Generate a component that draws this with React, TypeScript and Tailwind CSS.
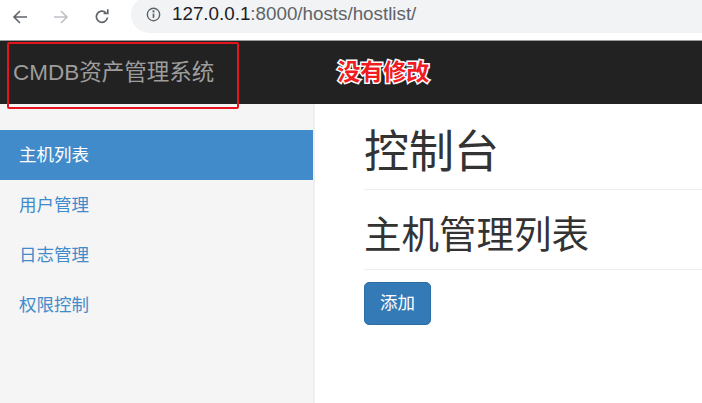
import React from "react";

const font = "font-['Liberation_Sans','Noto_Sans_CJK_SC',sans-serif]";

const menu = ["主机列表", "用户管理", "日志管理", "权限控制"];

// browser toolbar at the top of the screenshot
const Toolbar = () => {
  return (
    <div className="flex h-[40px] items-start bg-white">
      <div className="flex h-[33px] items-center pl-[12px] gap-[25px]">
        <svg width="16" height="16" viewBox="0 0 16 16" fill="none" stroke="#5f6368" strokeWidth="1.6">
          <path d="M15 8H2M8 2L2 8l6 6" />
        </svg>
        <svg width="16" height="16" viewBox="0 0 16 16" fill="none" stroke="#bdc1c6" strokeWidth="1.6">
          <path d="M1 8h13M8 2l6 6-6 6" />
        </svg>
        <svg width="16" height="16" viewBox="0 0 16 16" fill="none" stroke="#5f6368" strokeWidth="1.7">
          <path d="M13.5 8.5A5.6 5.6 0 1 1 11.8 3.6" />
          <path d="M9.6 4.4h4.2V0.3" fill="none" />
        </svg>
      </div>
      <div className="ml-[21px] mt-[-4px] flex h-[37px] flex-1 items-center rounded-l-full bg-[#f1f3f4] pl-[15px]">
        <svg width="15" height="15" viewBox="0 0 16 16" fill="none" stroke="#5f6368" strokeWidth="1.5">
          <circle cx="8" cy="8" r="6.6" />
          <path d="M8 7v4.6" strokeWidth="1.8" />
          <circle cx="8" cy="4.6" r="0.5" fill="#5f6368" />
        </svg>
        <div className={`ml-[11px] text-[18.8px] ${font}`}>
          <span className="text-[#202124]">127.0.0.1</span>
          <span className="text-[#5f6368]">:8000/hosts/hostlist/</span>
        </div>
      </div>
    </div>
  );
};

const App = () => {
  return (
    <div className={`flex h-[403px] w-[702px] flex-col overflow-hidden bg-white ${font}`}>
      <Toolbar />

      <div className="relative flex h-[64px] items-center border-t border-[#9a9a9a] bg-[#222222]">
        <div className="pl-[13px] text-[22.5px] text-[#9d9d9d]">CMDB资产管理系统</div>
        <div className="ml-[123px] text-[23px] font-bold text-[#f01c22] [-webkit-text-stroke:3px_white] [paint-order:stroke_fill]">
          没有修改
        </div>
        {/* annotation box drawn over the brand */}
        <div className="absolute left-[7px] top-[1px] z-10 h-[67px] w-[232px] rounded-[2px] border-2 border-[#e5141e]" />
      </div>

      <div className="flex flex-1">
        <div className="w-[315px] border-r-2 border-[#eeeeee] bg-[#f5f5f5] pt-[26px]">
          {menu.map((m, i) => (
            <div
              key={i}
              className={`flex h-[50px] items-center pl-[19px] text-[17.5px] ${
                i === 0 ? "bg-[#428bca] text-white" : "text-[#428bca]"
              }`}
            >
              {m}
            </div>
          ))}
        </div>

        <div className="flex-1 pl-[49px] pt-[24px] text-[#333333]">
          <h1 className="border-b border-[#eeeeee] pb-[11px] text-[45px] leading-[1.1]">控制台</h1>
          <h2 className="mt-[25px] border-b border-[#eeeeee] pb-[13px] text-[37.5px] leading-[1.1]">
            主机管理列表
          </h2>
          <button className="mt-[12px] flex h-[43px] w-[67px] items-center justify-center rounded-[5px] border border-[#2e6da4] bg-[#337ab7] text-[17.5px] text-white">
            添加
          </button>
        </div>
      </div>
    </div>
  );
};

export default App;
